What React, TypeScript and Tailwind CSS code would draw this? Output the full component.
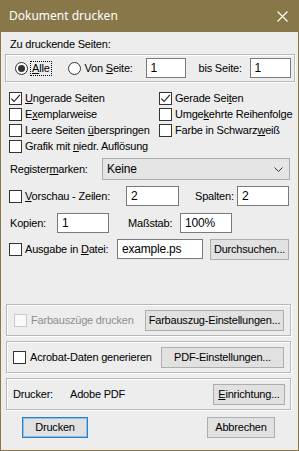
import type { ReactNode } from 'react';
import clsx from 'clsx';

const Key = ({ c }: { c: string }) => (
  <span className="underline decoration-[1px] underline-offset-[1px]">{c}</span>
);

function Check({ checked, disabled }: { checked?: boolean; disabled?: boolean }) {
  return (
    <span
      className={clsx(
        'flex h-[13px] w-[13px] shrink-0 items-center justify-center border',
        disabled ? 'border-[#cacaca] bg-[#f9f9f9]' : 'border-[#333] bg-white',
      )}
    >
      {checked && (
        <svg width="11" height="11" viewBox="0 0 11 11">
          <path d="M1.3 5.6 L4.1 8.5 L9.8 1.8" fill="none" stroke="#1a1a1a" strokeWidth="1.1" />
        </svg>
      )}
    </span>
  );
}

function Radio({ on }: { on?: boolean }) {
  return (
    <span className="flex h-[13px] w-[13px] shrink-0 items-center justify-center rounded-full border border-[#333] bg-white">
      {on && <span className="h-[7px] w-[7px] rounded-full bg-[#333]" />}
    </span>
  );
}

function CheckRow({ checked, children }: { checked?: boolean; children: ReactNode }) {
  return (
    <div className="flex h-[16px] items-center gap-[3px]">
      <Check checked={checked} />
      <span className="whitespace-nowrap">{children}</span>
    </div>
  );
}

function Field({ value, w }: { value: string; w: string }) {
  return (
    <div className={clsx('flex h-[20px] shrink-0 items-center border border-[#7a7a7a] bg-white pl-[4px] text-[12px]', w)}>
      {value}
    </div>
  );
}

function Btn({ children, w, primary }: { children: ReactNode; w: string; primary?: boolean }) {
  return (
    <div
      className={clsx(
        'flex h-[21px] shrink-0 items-center justify-center whitespace-nowrap bg-[#e1e1e1]',
        primary ? 'border border-[#2f7fc6] shadow-[inset_0_0_0_1px_#8cc0ec]' : 'border border-[#adadad]',
        w,
      )}
    >
      {children}
    </div>
  );
}

function Group({ children, className }: { children: ReactNode; className?: string }) {
  return (
    <div
      className={clsx(
        'flex shrink-0 items-center border border-[#b8b8b8] shadow-[inset_1px_1px_0_#fff,1px_1px_0_#fff]',
        className,
      )}
    >
      {children}
    </div>
  );
}

export default function App() {
  return (
    <div className="flex h-[451px] w-[299px] flex-col bg-[#887849] font-['Liberation_Sans',Arial,sans-serif] text-[11px] tracking-[-0.2px] text-black">
      {/* Title bar */}
      <div className="flex h-[32px] shrink-0 items-center justify-between pl-[9px] pr-[11px]">
        <span className="font-['Noto_Sans',sans-serif] text-[12px] tracking-normal text-white">Dokument drucken</span>
        <svg width="11" height="11" viewBox="0 0 11 11">
          <path d="M0.5 0.5 L10.5 10.5 M10.5 0.5 L0.5 10.5" stroke="#fff" strokeWidth="1.1" />
        </svg>
      </div>

      {/* Body */}
      <div className="mx-px mb-px flex flex-1 flex-col bg-[#ededed]">
        <div className="mt-[4px] flex h-[16px] items-center pl-[9px]">Zu druckende Seiten:</div>

        <Group className="ml-[4px] mt-[2px] h-[28px] w-[290px] pl-[9px]">
          <Radio on />
          <span className="ml-[2px] border border-dotted border-black px-px leading-[13px]">
            <Key c="A" />lle
          </span>
          <span className="ml-[16px]">
            <Radio />
          </span>
          <span className="ml-[4px] w-[61px] whitespace-nowrap">
            Von <Key c="S" />eite:
          </span>
          <Field value="1" w="w-[40px]" />
          <span className="ml-[13px] w-[51px] whitespace-nowrap">bis Seite:</span>
          <Field value="1" w="w-[41px]" />
        </Group>

        <div className="mt-[8px] flex pl-[8px]">
          <div className="flex w-[150px] flex-col">
            <CheckRow checked>
              <Key c="U" />ngerade Seiten
            </CheckRow>
            <CheckRow>
              E<Key c="x" />emplarweise
            </CheckRow>
            <CheckRow>
              Leere Seiten <Key c="ü" />berspringen
            </CheckRow>
            <CheckRow>
              Grafik mit <Key c="n" />iedr. Auflösung
            </CheckRow>
          </div>
          <div className="flex flex-col">
            <CheckRow checked>
              Gerade Sei<Key c="t" />en
            </CheckRow>
            <CheckRow>
              Umge<Key c="k" />ehrte Reihenfolge
            </CheckRow>
            <CheckRow>
              Farbe in Schwarz<Key c="w" />eiß
            </CheckRow>
          </div>
        </div>

        <div className="mt-[4px] flex h-[22px] items-center pl-[9px]">
          <span className="w-[92px]">
            Register<Key c="m" />arken:
          </span>
          <div className="flex h-[22px] w-[188px] items-center justify-between border border-[#acacac] bg-[#e5e5e5] pl-[4px] pr-[6px] text-[12px]">
            Keine
            <svg width="9" height="5" viewBox="0 0 9 5">
              <path d="M0.5 0.5 L4.5 4.5 L8.5 0.5" fill="none" stroke="#333" strokeWidth="1" />
            </svg>
          </div>
        </div>

        <div className="mt-[6px] flex h-[20px] items-center pl-[8px]">
          <div className="flex w-[117px] items-center gap-[3px]">
            <Check />
            <span className="whitespace-nowrap">
              <Key c="V" />orschau - Zeilen:
            </span>
          </div>
          <Field value="2" w="w-[53px]" />
          <span className="ml-[16px] w-[42px]">Spalten:</span>
          <Field value="2" w="w-[52px]" />
        </div>

        <div className="mt-[7px] flex h-[20px] items-center pl-[9px]">
          <span className="w-[47px]">Kopien:</span>
          <Field value="1" w="w-[52px]" />
          <span className="ml-[19px] w-[52px]">Maßstab:</span>
          <Field value="100%" w="w-[52px]" />
        </div>

        <div className="mt-[6px] flex h-[20px] items-center pl-[8px]">
          <div className="flex w-[108px] items-center gap-[3px]">
            <Check />
            <span className="whitespace-nowrap">
              Ausgabe in <Key c="D" />atei:
            </span>
          </div>
          <Field value="example.ps" w="w-[86px]" />
          <div className="ml-[7px]">
            <Btn w="w-[79px]">Durchsuchen...</Btn>
          </div>
        </div>

        <Group className="ml-[5px] mt-[45px] h-[32px] w-[285px] justify-between pl-[7px] pr-[6px]">
          <div className="flex items-center gap-[4px] text-[#8d8d8d]">
            <Check disabled />
            <span>Farbauszüge drucken</span>
          </div>
          <Btn w="w-[139px]">Farbauszug-Einstellungen...</Btn>
        </Group>

        <Group className="ml-[5px] mt-[5px] h-[32px] w-[285px] justify-between pl-[6px] pr-[6px]">
          <div className="flex items-center gap-[4px]">
            <Check />
            <span>Acrobat-Daten generieren</span>
          </div>
          <Btn w="w-[123px]">PDF-Einstellungen...</Btn>
        </Group>

        <Group className="ml-[5px] mt-[5px] h-[32px] w-[285px] justify-between pl-[6px] pr-[5px]">
          <div className="flex items-center">
            <span className="w-[57px]">Drucker:</span>
            <span>Adobe PDF</span>
          </div>
          <Btn w="w-[72px]">
            <span>
              <Key c="E" />inrichtung...
            </span>
          </Btn>
        </Group>

        <div className="mt-[7px] flex h-[21px] items-center justify-between pl-[21px] pr-[23px]">
          <Btn w="w-[66px]" primary>
            Drucken
          </Btn>
          <Btn w="w-[68px]">Abbrechen</Btn>
        </div>
      </div>
    </div>
  );
}
